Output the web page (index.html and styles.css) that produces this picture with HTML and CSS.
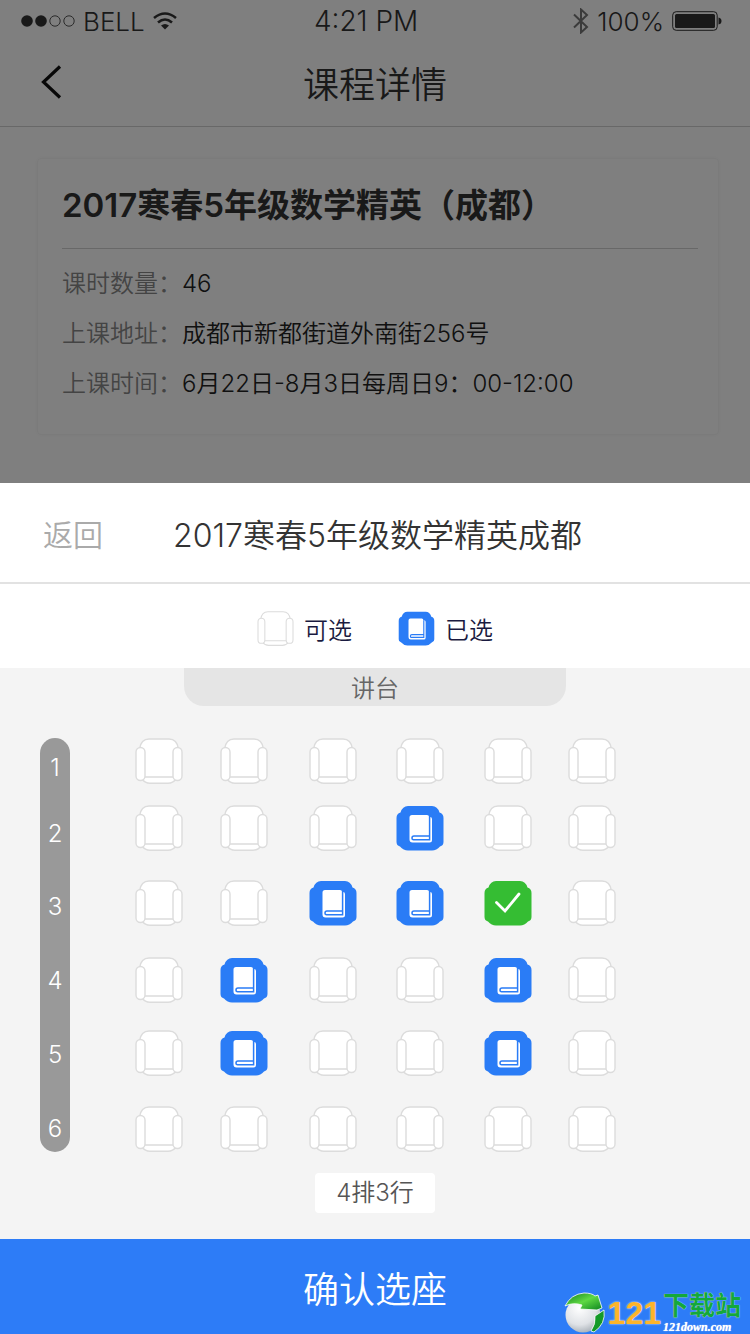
FILE: index.html
```html
<!DOCTYPE html>
<html lang="zh-CN">
<head>
<meta charset="utf-8">
<meta name="viewport" content="width=device-width, initial-scale=1">
<title>课程详情</title>
<link rel="stylesheet" href="styles.css">
</head>
<body>

<!-- shared shapes -->
<svg class="defs" width="0" height="0" aria-hidden="true">
	<symbol id="seat-free" viewBox="0 0 48 46">
		<g fill="#fff" stroke="#dcdcdc" stroke-width="1.4">
			<path d="M4.500 40V11Q6 1 14 1H34Q42 1 43.500 11V40Z"/>
			<path d="M10 39H38L41 41Q38 45.200 33 45.200H15Q10 45.200 7 41Z"/>
			<rect x="1" y="9.500" width="9" height="33" rx="4.500"/>
			<rect x="38" y="9.500" width="9" height="33" rx="4.500"/>
		</g>
	</symbol>
	<symbol id="seat-shape" viewBox="0 0 48 46">
		<path d="M12 1H36Q41.500 1 43.500 7.500Q47.500 8.500 47.500 13V37Q47.500 40.500 44 41.500Q40.500 45.500 36 45.500H12Q7.500 45.500 4 41.500Q.5 40.500 .5 37V13Q.5 8.500 4.500 7.500Q6.500 1 12 1Z"/>
	</symbol>
	<symbol id="seat-taken" viewBox="0 0 48 46">
		<use href="#seat-shape" fill="#2a7cf6"/>
		<path fill="#fff" d="M16 10H31Q33 10 33 12H34Q36 12 36 14V35Q36 37.500 33.500 37.500H16.500Q13.500 37.500 13.500 34.500V12.500Q13.500 10 16 10Z"/>
		<path fill="none" stroke="#2a7cf6" stroke-width="1.5" d="M33.600 12V31H18Q16 31 16 33T18 34.700H33.600V31"/>
	</symbol>
	<symbol id="seat-mine" viewBox="0 0 48 46">
		<use href="#seat-shape" fill="#35bd33"/>
		<path fill="none" stroke="#fff" stroke-width="2.800" stroke-linecap="round" d="M12.500 22.500L21 31L35 14"/>
	</symbol>
</svg>

<div class="page">
	<div class="status_bar">
		<div class="status_left">
			<svg width="54" height="14" viewBox="0 0 54 14" aria-hidden="true">
				<circle cx="6" cy="7" r="5.800" fill="#333"/>
				<circle cx="20" cy="7" r="5.800" fill="#333"/>
				<circle cx="34" cy="7" r="5.200" fill="none" stroke="#555"/>
				<circle cx="48" cy="7" r="5.200" fill="none" stroke="#555"/>
			</svg>
			<span>BELL</span>
			<svg width="24" height="18" viewBox="0 0 24 18" fill="none" stroke="#333" stroke-width="2.600" aria-hidden="true">
				<path d="M1 6Q12-3 23 6M5 10.500Q12 4.500 19 10.500"/>
				<path d="M8 13.500Q12 10.500 16 13.500L12 17.500Z" fill="#333" stroke="none"/>
			</svg>
		</div>
		<span class="clock">4:21 PM</span>
		<div class="status_right">
			<svg width="16" height="26" viewBox="0 0 16 26" fill="none" stroke="#777" stroke-width="2" aria-hidden="true">
				<path d="M1 6.500L14 19L8 24.500V1.500L14 7L1 19.500"/>
			</svg>
			<span>100%</span>
			<svg width="50" height="20" viewBox="0 0 50 20" aria-hidden="true">
				<rect x=".7" y=".7" width="44.500" height="18.600" rx="3.500" fill="none" stroke="#333"/>
				<rect x="3" y="3" width="40" height="14" rx="1.500" fill="#333"/>
				<path d="M46.500 6.500Q49.500 7 49.500 10T46.500 13.500Z" fill="#333"/>
			</svg>
		</div>
	</div>

	<header class="nav">
		<button class="nav_back" aria-label="返回上一页">
			<svg width="22" height="34" viewBox="0 0 22 34" fill="none" stroke="#111" stroke-width="3.200" aria-hidden="true"><path d="M19 1.500L2.500 17L19 32.500"/></svg>
		</button>
		<h1>课程详情</h1>
	</header>

	<section class="card">
		<h2>2017寒春5年级数学精英（成都）</h2>
		<dl>
			<dt>课时数量：</dt><dd>46</dd>
			<dt>上课地址：</dt><dd>成都市新都街道外南街256号</dd>
			<dt>上课时间：</dt><dd>6月22日-8月3日每周日9：00-12:00</dd>
		</dl>
	</section>
</div>

<main class="sheet">
	<div class="sheet_head">
		<button class="sheet_back">返回</button>
		<h2>2017寒春5年级数学精英成都</h2>
	</div>

	<div class="legend">
		<span><svg width="37" height="35" aria-hidden="true"><use href="#seat-free"/></svg>可选</span>
		<span><svg width="37" height="35" aria-hidden="true"><use href="#seat-taken"/></svg>已选</span>
	</div>

	<div class="room">
		<div class="podium">讲台</div>
		<div class="seat_area">
			<div class="rail"><span>1</span><span>2</span><span>3</span><span>4</span><span>5</span><span>6</span></div>
			<div class="seats" id="seats"></div>
		</div>
		<div class="picked">4排3行</div>
	</div>

	<footer class="bottom">
		<button class="confirm">确认选座</button>
		<div class="mark">
			<svg width="42" height="42" viewBox="0 0 42 42" aria-hidden="true">
				<defs>
					<radialGradient id="ball" cx=".4" cy=".3" r=".8"><stop offset="0" stop-color="#fff"/><stop offset=".6" stop-color="#dfe2e6"/><stop offset="1" stop-color="#9aa3ac"/></radialGradient>
					<linearGradient id="leaf" x2="1" y2="1"><stop offset="0" stop-color="#0f7a1c"/><stop offset=".5" stop-color="#5fd943"/><stop offset="1" stop-color="#0b8420"/></linearGradient>
				</defs>
				<circle cx="19" cy="23" r="17.500" fill="url(#ball)"/>
				<path fill="url(#leaf)" stroke="#fff" stroke-width=".8" d="M1 14Q7 2 20 1Q28 1 31 4L34 3L38 16L33 18L16 17L18 13Q9 10 1 14Z"/>
				<path fill="#149a28" stroke="#fff" stroke-width=".8" d="M31 24L40 18Q42 32 30 40L27 39Q32 32 31 24Z"/>
			</svg>
			<b class="mark_num">121</b>
			<div class="mark_text"><b>下载站</b><i>121down.com</i></div>
		</div>
	</footer>
</main>

<script>
// . free   x taken   o my seat
var ROWS = [
	"......",
	"...x..",
	"..xxo.",
	".x..x.",
	".x..x.",
	"......"
];
var KINDS = { ".": "free", "x": "taken", "o": "mine" };

var html = "";
for (var r = 0; r < ROWS.length; r++)
	for (var c = 0; c < ROWS[r].length; c++) {
		var kind = KINDS[ROWS[r][c]];
		html += '<button class="seat" aria-label="' + (r + 1) + '排' + (c + 1) + '座"' + (kind === "taken" ? " disabled" : "") + '>' +
			'<svg width="48" height="46"><use href="#seat-' + kind + '"/></svg></button>';
	}
document.getElementById("seats").innerHTML = html;
</script>
</body>
</html>
```
FILE: styles.css
```css
* {
	box-sizing: border-box;
}

body {
	margin: 0;
	min-height: 100vh;
	display: flex;
	flex-direction: column;
	background: #fff;
	color: #333;
	font-family: Inter, "Noto Sans CJK SC", sans-serif;
	font-weight: 350;
	font-size: 24px;
}

h1, h2, dl, dd {
	margin: 0;
	font-weight: 350;
}

button {
	padding: 0;
	border: 0;
	background: none;
	color: inherit;
	font: inherit;
	cursor: pointer;
}

svg {
	display: block;
	flex: none;
}

.defs {
	position: absolute;
}

/* dimmed course page */
.page {
	position: relative;
	padding-bottom: 48px;
}

.page::after {
	content: "";
	position: absolute;
	inset: 0;
	background: rgba(0, 0, 0, .5);
}

.status_bar {
	display: grid;
	grid-template-columns: 27fr auto 28fr;
	align-items: center;
	height: 42px;
	padding: 0 28px 0 21px;
	font-size: 26px;
	font-weight: 300;
}

.clock {
	font-size: 28px;
}

.status_left, .status_right {
	display: flex;
	align-items: center;
	gap: 8px;
}

.status_right {
	justify-content: flex-end;
}

.nav {
	display: grid;
	grid-template-columns: 100px 1fr 100px;
	align-items: center;
	height: 85px;
	padding-bottom: 4px;
	border-bottom: 1px solid #d0d0d0;
}

.nav_back {
	padding-left: 41px;
}

.nav h1 {
	font-size: 36px;
	text-align: center;
}

.card {
	margin: 31px 31px 0 37px;
	padding: 0 20px 25px 24px;
	border: 1px solid #f6f6f6;
	border-radius: 4px;
	box-shadow: 0 0 4px rgba(0, 0, 0, .04);
}

.card h2 {
	height: 90px;
	line-height: 92px;
	border-bottom: 1px solid #d0d0d0;
	font-size: 33px;
	font-weight: 600;
}

.card dl {
	display: grid;
	grid-template-columns: auto 1fr;
	padding-top: 10px;
	line-height: 50px;
	color: #222;
}

.card dt {
	color: #888;
}

/* seat picker */
.sheet {
	flex: 1;
	display: flex;
	flex-direction: column;
}

.sheet_head {
	display: flex;
	align-items: center;
	gap: 70px;
	height: 101px;
	padding-left: 43px;
	border-bottom: 2px solid #e2e2e2;
	font-size: 30px;
}

.sheet_back {
	color: #aaa;
}

.sheet_head h2 {
	font-size: 32px;
}

.legend {
	display: flex;
	justify-content: center;
	gap: 46px;
	height: 84px;
	padding-top: 4px;
	color: #1a1a40;
}

.legend span {
	display: flex;
	align-items: center;
	gap: 10px;
}

.room {
	flex: 1;
	background: #f4f4f4;
}

.podium {
	width: 51%;
	height: 38px;
	margin: 0 auto;
	line-height: 42px;
	border-radius: 0 0 20px 20px;
	background: #e5e5e5;
	color: #666;
	text-align: center;
}

.seat_area {
	display: flex;
	gap: 65px;
	padding: 32px 134px 0 40px;
}

.rail {
	display: grid;
	grid-template-rows: 66px 73px 74px 74px 74px 30px;
	width: 30px;
	padding: 15px 0 8px;
	border-radius: 15px;
	background: #999;
	color: #fff;
	line-height: 30px;
	text-align: center;
}

.seats {
	flex: 1;
	display: grid;
	grid-template-columns: 85fr 88fr 87fr 87fr 84fr 48px;
	grid-template-rows: 67px 75px 77px 73px 76px 46px;
	align-items: start;
	justify-items: start;
}

.picked {
	width: 120px;
	margin: 21px auto 26px;
	line-height: 40px;
	border-radius: 4px;
	background: #fff;
	color: #555;
	text-align: center;
}

.bottom {
	position: relative;
}

.confirm {
	display: block;
	width: 100%;
	height: 95px;
	background: #2d7cf7;
	color: #fff;
	font-size: 36px;
}

/* site mark lies over the button */
.mark {
	position: absolute;
	right: 9px;
	bottom: 0;
	display: flex;
	align-items: center;
	gap: 2px;
}

.mark_num {
	color: #fdb42a;
	font: bold 32px/36px "Liberation Sans", sans-serif;
	text-shadow: 0 0 2px #fff;
}

.mark_text {
	display: flex;
	flex-direction: column;
	color: #14a83c;
	font-size: 26px;
	line-height: 28px;
	text-shadow: 0 0 1px #fff;
}

.mark_text b {
	font-weight: 700;
}

.mark_text i {
	color: #fff;
	font: italic bold 12px/14px "Liberation Serif", serif;
}
```
